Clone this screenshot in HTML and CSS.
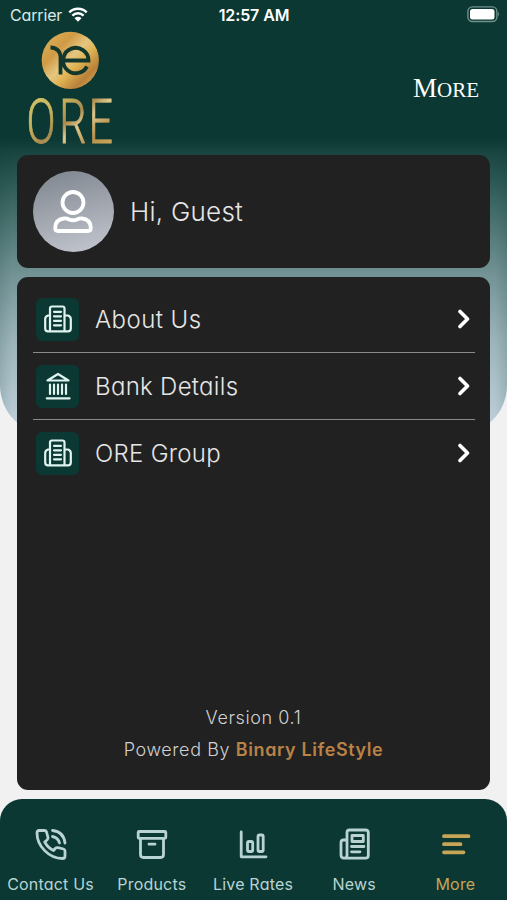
FILE: index.html
```html
<!DOCTYPE html>
<html lang="en">
<head>
<meta charset="utf-8">
<title>ORE</title>
<link rel="stylesheet" href="styles.css">
</head>
<body>
<svg width="0" height="0" class="defs">
  <symbol id="building" viewBox="0 0 28 28"><path d="M6 26V3.500Q6 1.500 8 1.500H18.500Q20.500 1.500 20.500 3.500V26M6 10.500H4Q1.200 11.500 1.200 14V23.500Q1.200 26.300 4 26.300H24Q26.800 26.300 26.800 23.500V14Q26.800 11.500 24 10.500H20.500M10 6.800h7M10 11.300h7M10 15.800h7M10 20.300h7M6 12v11M20.500 12v11"/></symbol>
  <symbol id="chevron" viewBox="0 0 14 20"><path d="M3 2.500 10.500 10 3 17.500"/></symbol>
</svg>
<div class="app">
  <div class="statusbar">
    <div class="carrier"><span>Carrier</span>
      <svg width="20" height="15" viewBox="0 0 20 15"><path d="M1.300 5.300a12.500 12.500 0 0 1 17.400 0M4.400 8.600a8 8 0 0 1 11.200 0" fill="none" stroke="#fff" stroke-width="2.500"/><path d="M10 14.800 6.500 11.300a5 5 0 0 1 7 0Z" fill="#fff"/></svg>
    </div>
    <div class="time">12:57 AM</div>
    <div class="battery"><svg width="34" height="17" viewBox="0 0 34 17"><rect x=".9" y=".9" width="29" height="14.600" rx="4.500" fill="none" stroke="#71908c" stroke-width="1.400"/><rect x="3" y="3" width="24.500" height="10.500" rx="2.500" fill="#fff"/><path d="M31.200 5.800q2 2.400 0 4.800z" fill="#71908c"/></svg></div>
  </div>
  <header class="header">
    <svg class="logo" width="110" height="127" viewBox="0 0 110 127">
      <defs>
        <linearGradient id="gold" x1="0" y1="0" x2="1" y2="1"><stop offset="0" stop-color="#dfb75d"/><stop offset=".3" stop-color="#cf9a45"/><stop offset=".48" stop-color="#e5c681"/><stop offset=".6" stop-color="#dfb352"/><stop offset=".78" stop-color="#b9803b"/><stop offset="1" stop-color="#e1b956"/></linearGradient>
        <linearGradient id="word" x1="0" y1="0" x2="1" y2="1"><stop offset="0" stop-color="#d8c66c"/><stop offset=".3" stop-color="#c9b45e"/><stop offset=".48" stop-color="#a98a4c"/><stop offset=".58" stop-color="#dfc98c"/><stop offset=".75" stop-color="#b98f4b"/><stop offset="1" stop-color="#d3bd67"/></linearGradient>
      </defs>
      <circle cx="43.300" cy="32.300" r="28.600" fill="url(#gold)"/>
      <g fill="none" stroke="#12382e" stroke-width="3.800"><path d="M23.500 19.500C29 19.500 33.500 23 33.500 29V46.500M35.500 32.500H61.500A12.700 12.700 0 1 0 60 38.500"/></g>
      <text transform="translate(-.5 115) scale(.68 .98)" x="0 48 91" y="0" class="wordmark" fill="url(#word)" stroke="url(#word)">ORE</text>
    </svg>
    <h1 class="title">More</h1>
  </header>
  <main class="content">
    <section class="card profile">
      <div class="avatar"><svg width="40" height="46" viewBox="0 0 40 46"><g fill="none" stroke="#fff" stroke-width="3.800"><circle cx="20" cy="13.500" r="10.500"/><path d="M11 29.500Q2.800 30.500 2.300 38V39.500Q2.300 42 5 42H35Q37.700 42 37.700 39.500V38Q37.200 30.500 29 29.500Q26 29.300 24 30.500Q20 32 16 30.500Q14 29.300 11 29.500Z"/></g></svg></div>
      <span class="greeting">Hi, Guest</span>
    </section>
    <section class="card menu">
      <div class="row"><span class="tile"><svg width="28" height="28"><use href="#building"/></svg></span><span class="name about">About Us</span><svg class="chev" width="14" height="20"><use href="#chevron"/></svg></div>
      <div class="row"><span class="tile"><svg width="28" height="28" viewBox="0 0 28 28"><path d="M3.500 8.500 14 2 24.500 8.500ZM6 12.500v9.500M10 12.500v9.500M14 12.500v9.500M18 12.500v9.500M22 12.500v9.500M2.800 26.300h22.800"/></svg></span><span class="name">Bank Details</span><svg class="chev" width="14" height="20"><use href="#chevron"/></svg></div>
      <div class="row"><span class="tile"><svg width="28" height="28"><use href="#building"/></svg></span><span class="name">ORE Group</span><svg class="chev" width="14" height="20"><use href="#chevron"/></svg></div>
      <footer class="about-app"><p class="version">Version 0.1</p><p class="powered">Powered By <b>Binary LifeStyle</b></p></footer>
    </section>
  </main>
  <nav class="tabs">
    <div class="tab"><svg width="32" height="32" viewBox="0 0 32 32"><path d="M4 2.500H9.500Q11 2.500 11.500 4L13 9.500Q13.300 10.800 12 12L9.700 14Q13 20 18.500 22.500L20.500 20.300Q21.500 19.300 23 19.700L28.500 21Q30 21.400 30 23V28Q30 30.500 27.500 30.500C14 30.500 2 18 2 5Q2 2.500 4 2.500ZM17.500 2.500Q28.500 3.500 30 15M17.500 8.500Q23 9.500 24.500 15"/></svg><span>Contact Us</span></div>
    <div class="tab"><svg width="32" height="32" viewBox="0 0 32 32"><rect x="2.200" y="3.500" width="27.600" height="6.800" rx="1"/><path d="M4.500 10.500V26.500Q4.500 29.500 7.500 29.500H24.500Q27.500 29.500 27.500 26.500V10.500M13 16.200h6"/></svg><span>Products</span></div>
    <div class="tab"><svg width="32" height="32" viewBox="0 0 32 32"><path d="M4.200 4v24.800H29"/><rect x="10.500" y="13.500" width="5.200" height="10" rx="1.500"/><rect x="21" y="7" width="5.200" height="16.500" rx="1.500"/></svg><span>Live Rates</span></div>
    <div class="tab"><svg width="32" height="32" viewBox="0 0 32 32"><path d="M6 30.200H27.500Q30.300 30.200 30.300 27.500V4.500Q30.300 2 27.500 2H11.500Q9 2 9 4.500V27.500Q9 30.200 6 30.200Q3 30.200 3 27V14.500Q3 12 5.500 12H9M13.500 18.500h12.500M13.500 23.800h8.500"/><rect x="14" y="7.500" width="11.300" height="6"/></svg><span>News</span></div>
    <div class="tab active"><svg width="32" height="32" viewBox="0 0 32 32"><path d="M5 8.200h24.500M5 16.200h16.500M5 24.300h19.500"/></svg><span>More</span></div>
  </nav>
</div>
</body>
</html>
```
FILE: styles.css
```css
* { box-sizing: border-box; }
body { margin: 0; font-family: Inter, "Liberation Sans", sans-serif; font-feature-settings: "cv11"; background: #f1f1f1; }
.defs { display: block; position: absolute; }
.app {
  height: 900px; width: 507px; display: flex; flex-direction: column; isolation: isolate; position: relative;
}
.app::before {
  content: ""; position: absolute; z-index: -1; inset: 0 0 auto 0; height: 435px; border-radius: 0 0 50px 50px;
  background:
    linear-gradient(90deg, #0b383222, #0b383200 12px, #0b383200 495px, #0b383222),
    linear-gradient(#0b3832 138px, #184540 152px, #3d6864 205px, #739395 275px, #9bb3b9 340px, #bbcdd7 420px);
}
.statusbar { height: 28px; display: grid; grid-template-columns: 1fr auto 1fr; align-items: center; padding: 1px 6px 0 10px; color: #fff; }
.carrier { display: flex; align-items: center; gap: 6px; font-size: 16px; letter-spacing: -.15px; color: #dce8e6; }
.time { font-size: 16px; font-weight: 600; letter-spacing: -.1px; margin-left: -3px; }
.battery { display: flex; justify-content: flex-end; }
.header { height: 127px; display: flex; justify-content: space-between; padding: 0 28px 0 27px; }
.logo { overflow: visible; }
.wordmark { font-family: Roboto, sans-serif; font-weight: 300; font-size: 63px; stroke-width: .8px; }
.title { margin: 43px 0 0; font: 400 21px/34px "Liberation Serif", serif; text-transform: uppercase; color: #fff; }
.title::first-letter { font-size: 27px; }
.content { height: 635px; margin: 0 17px; display: flex; flex-direction: column; gap: 9px; }
.card { background: #212121; border-radius: 11px; color: #e6e6e6; }
.profile { height: 113px; padding: 0 16px; display: flex; align-items: center; gap: 16px; }
.avatar { width: 81px; height: 81px; border-radius: 50%; background: linear-gradient(165deg, #7d848d, #c5c8d0); display: grid; place-items: center; padding-right: 2px; }
.greeting { font-size: 26px; font-weight: 300; letter-spacing: .25px; }
.menu { flex: 1; padding: 9px 15px 0 16px; display: flex; flex-direction: column; }
.row { height: 67px; display: flex; align-items: center; padding: 0 4px 0 3px; border-bottom: 1.500px solid #8a8a8a; }
.row:nth-child(3) { border-color: transparent; }
.tile { width: 43px; height: 43px; border-radius: 6px; background: #0b3832; display: grid; place-items: center; margin-right: 16px; }
.tile svg { fill: none; stroke: #dff3f0; stroke-width: 2.200; stroke-linejoin: round; stroke-linecap: round; }
.name { flex: 1; font-size: 24px; font-weight: 300; letter-spacing: .3px; }
.about { letter-spacing: .45px; }
.chev { fill: none; stroke: #fff; stroke-width: 3.600; stroke-linecap: round; stroke-linejoin: round; }
.about-app { margin: auto 0 24px; text-align: center; font-size: 18px; font-weight: 300; letter-spacing: .6px; color: #d0d0d0; }
.about-app p { margin: 0 1px 0 0; line-height: 32px; white-space: nowrap; }
.about-app b { font-weight: 600; color: #b98247; }
.tabs { margin-top: 9px; height: 101px; border-radius: 22px 22px 0 0; background: #0b3832; display: flex; padding-right: 1px; }
.tab { flex: 1 1 0; display: flex; flex-direction: column; align-items: center; padding-top: 29px; color: #b9d3d3; font-size: 16px; letter-spacing: .2px; white-space: nowrap; }
.tab svg { fill: none; stroke: currentColor; stroke-width: 2.800; stroke-linecap: round; stroke-linejoin: round; }
.tab span { margin-top: 14px; line-height: 20px; }
.active { color: #c7a557; }
.active svg { stroke-width: 3.800; }
```
